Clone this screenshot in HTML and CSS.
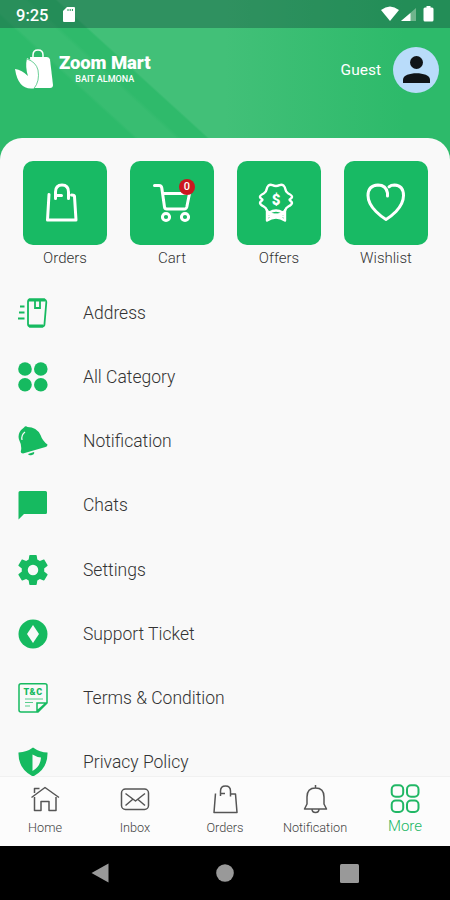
FILE: index.html
```html
<!DOCTYPE html>
<html lang="en">
<head>
    <meta charset="UTF-8">
    <meta name="viewport" content="width=device-width, initial-scale=1">
    <title>Zoom Mart - More</title>
    <link rel="stylesheet" href="styles.css">
</head>
<body>
    <div class="screen">
        <div class="status-bar">
            <span class="clock">9:25</span>
            <svg class="sd-card" width="12" height="15" viewBox="0 0 12 15"><path fill="#fff" d="M4 0h7q1 0 1 1v13q0 1-1 1H1q-1 0-1-1V4z"/><path stroke="#26945a" d="M5 2v2M7.2 2v2M9.4 2v2"/></svg>
            <div class="status-icons">
                <svg width="54" height="16" viewBox="0 0 54 16">
                    <path fill="#fff" d="M0 4Q9-3 18 4L9 15z"/>
                    <path fill="#6fb48c" d="M35 2v13H20z"/>
                    <path fill="#fff" d="M29.500 7v8H20z"/>
                    <path fill="#fff" d="M45.500 1.500V0h4v1.500h1.500q1.500 0 1.500 1.500v11q0 1.500-1.500 1.500h-7Q42.500 15.500 42.500 14V3q0-1.500 1.500-1.500z"/>
                </svg>
            </div>
        </div>

        <header class="header">
            <div class="brand">
                <svg class="logo" width="39" height="40" viewBox="0 0 39 40">
                    <path fill="none" stroke="#fff" stroke-width="1.500" d="M18 10V6q0-5 5-5t5 5v4"/>
                    <path fill="#fff" d="M15 8h17q2.500 0 3 2.500L38 36q0 3-3 3H17z"/>
                    <path fill="#fff" d="M12 9q9 4 11 12 2 11-4 18.500h-3Q3 39.500 0 20q7 1 13 7-3-9-1-18z"/>
                    <path fill="none" stroke="#2dba6a" stroke-width=".7" d="M12 10q9 3 11 11 2 11-4 18.500"/>
                </svg>
                <div class="brand-text">
                    <div class="brand-name">Zoom Mart</div>
                    <div class="brand-sub">BAIT ALMONA</div>
                </div>
            </div>
            <div class="user">
                <span class="user-name">Guest</span>
                <div class="avatar">
                    <svg width="27" height="27" viewBox="0 0 27 27"><circle cx="13.500" cy="6.500" r="6.500"/><path d="M0 27v-3.500C0 15 27 15 27 23.500V27z"/></svg>
                </div>
            </div>
        </header>

        <main class="panel">
            <div class="tiles">
                <div class="tile">
                    <div class="tile-box">
                        <svg class="tile-icon" width="42" height="42" viewBox="0 0 42 42">
                            <path d="M5 12.500 3.500 38h28.500L30.500 14.500q0-1.500-3-1.500M11.500 16.500V10q0-7 6.500-7t6.500 7v6.500M12 13.500h5.500"/>
                        </svg>
                    </div>
                    <span class="tile-label">Orders</span>
                </div>
                <div class="tile">
                    <div class="tile-box">
                        <svg class="tile-icon" width="42" height="42" viewBox="0 0 42 42">
                            <path d="M3.500 3.500H8q2.500 0 2.800 2.500l2.700 19q.3 2 2.300 2h17.500q2 0 2.500-2L38.500 11.500H12"/>
                            <circle cx="15" cy="35" r="3.600"/><circle cx="34" cy="35" r="3.600"/>
                        </svg>
                        <span class="badge">0</span>
                    </div>
                    <span class="tile-label">Cart</span>
                </div>
                <div class="tile">
                    <div class="tile-box">
                        <svg class="tile-icon" width="42" height="42" viewBox="0 0 42 42">
                            <path class="ribbon" d="M10.500 3.500q2-1.500 4-.3 3.500 1.600 7 0 2-1.200 4 .3 1.500 1.500 1.800 3.500.4 3 3 4.500 4 2 3.700 3.500-.2 1.200-1.700 2t0 1.800q1.700 1.200 1.700 2.200 0 1.500-3.700 3.500-2.600 1.500-3 3.500-1 2.500-3.300 2.300-2.500-1.800-6-1.800t-6 1.800q-2.300.2-3.300-2.300-.4-2-3-3.500Q2 22.500 2 21q0-1 1.700-2.200 1.500-1 0-1.800T2 15q-.3-1.500 3.700-3.500 2.600-1.500 3-4.500.3-2 1.800-3.500z"/>
                            <path class="ribbon" d="M9 28.500v10q9-6 18 0v-10M10 31.500l16 3M26 31.500l-16 3"/>
                            <text class="dollar" x="18" y="22.500">$</text>
                        </svg>
                    </div>
                    <span class="tile-label">Offers</span>
                </div>
                <div class="tile">
                    <div class="tile-box">
                        <svg class="tile-icon" width="42" height="42" viewBox="0 0 42 42">
                            <path d="M22.500 14V11q-1.500-8-9.500-8Q3 3.500 3 13.500q0 8 8 16 5 5 10 8 5-3 10-8 7.500-8 7.500-16 0-10-9-10.500-3.500 0-5.500 1.800"/>
                        </svg>
                    </div>
                    <span class="tile-label">Wishlist</span>
                </div>
            </div>

            <div class="menu">
                <div class="menu-item">
                    <svg class="menu-icon" viewBox="0 0 30 30"><path class="line" d="M11.500 1.500h14q3 0 2.800 3L26.500 26q0 2.500-2.500 2.500H12.500q-2.500 0-2.500-2.500V4q0-2.500 1.500-2.500zM17 2v8h5V2M2 8.500h4.500M1 14.500h5.500M0 20.500h6.500"/><path class="edge" d="M11 2h16M11 28h14"/></svg>
                    <span>Address</span>
                </div>
                <div class="menu-item">
                    <svg class="menu-icon" viewBox="0 0 30 30"><circle cx="7" cy="7" r="6.800"/><circle cx="22.800" cy="7" r="6.800"/><circle cx="7" cy="22.800" r="6.800"/><circle cx="22.800" cy="22.800" r="6.800"/></svg>
                    <span>All Category</span>
                </div>
                <div class="menu-item">
                    <svg class="menu-icon" viewBox="0 0 30 30"><path d="M6 1.500Q7.500-.5 9.500 1q9 0 13 8 2 6 7 9.500 0 2-2 2.500L5 27.500q-3 0-2-3 1-5-2-11-2-7 5-12zM10 28l6-2q1 2-2 3t-4-1z"/><path class="shine" d="M4 14q-1-5 3-8"/></svg>
                    <span>Notification</span>
                </div>
                <div class="menu-item">
                    <svg class="menu-icon" viewBox="0 0 30 30"><path d="M2 1h25.500q1.500 0 1.500 1.500v20Q29 24 27.500 24H6l-5.500 5.500v-27Q.5 1 2 1z"/></svg>
                    <span>Chats</span>
                </div>
                <div class="menu-item">
                    <svg class="menu-icon" viewBox="2 2 20 20"><path d="M19.430 12.980c.04-.32.070-.64.070-.98s-.03-.66-.07-.98l2.110-1.650c.19-.15.240-.42.120-.64l-2-3.460c-.12-.22-.39-.3-.61-.22l-2.490 1c-.52-.4-1.080-.73-1.690-.98l-.38-2.650A.488.488 0 0 0 14 2h-4c-.25 0-.46.180-.49.420l-.38 2.650c-.61.250-1.170.590-1.690.980l-2.490-1c-.23-.09-.49 0-.61.220l-2 3.460c-.13.220-.07.490.120.640l2.110 1.650c-.04.320-.07.650-.07.980s.03.660.070.980l-2.110 1.650c-.19.150-.24.420-.12.640l2 3.460c.12.220.39.300.61.220l2.490-1c.52.400 1.080.730 1.690.980l.38 2.650c.03.240.24.420.49.420h4c.25 0 .46-.18.490-.42l.38-2.650c.61-.25 1.170-.59 1.690-.98l2.490 1c.23.090.49 0 .61-.22l2-3.460c.12-.22.070-.49-.12-.64zM12 15.500a3.500 3.500 0 1 1 0-7 3.500 3.500 0 0 1 0 7z"/></svg>
                    <span>Settings</span>
                </div>
                <div class="menu-item">
                    <svg class="menu-icon" viewBox="0 0 30 30"><circle cx="15" cy="15" r="14.500"/><path class="cut" d="m15 6 6 9-6 9-6-9z"/></svg>
                    <span>Support Ticket</span>
                </div>
                <div class="menu-item">
                    <svg class="menu-icon" viewBox="0 0 30 30"><path class="thin" d="M3 .8h24q2 0 2 2V20l-9 9H3q-2 0-2-2V2.800q0-2 2-2zM19 28v-8h9z"/><path class="faint" d="M7 16h18M7 19.500h8M7 23h5"/><text class="tc" x="15" y="12">T&amp;C</text></svg>
                    <span>Terms &amp; Condition</span>
                </div>
                <div class="menu-item">
                    <svg class="menu-icon" viewBox="0 0 30 30"><path d="M15 .5q7 5 14.500 5Q30 22 15 29.500 0 22 .5 5.500 9 5 15 .5z"/><path class="cut" d="M14.500 7.500q4 2.500 8.500 3-.5 9-8.500 13.500z"/></svg>
                    <span>Privacy Policy</span>
                </div>
            </div>
        </main>

        <nav class="tab-bar">
            <div class="tab">
                <svg class="tab-icon" viewBox="0 0 30 30"><path d="M1.500 12.500 15 2.500l14 10M4.500 12v13.500H11v-9h8v9h7V12M4.500 8V3.500h5"/></svg>
                <span>Home</span>
            </div>
            <div class="tab">
                <svg class="tab-icon" viewBox="0 0 30 30"><rect x="1.500" y="4" width="27" height="20.500" rx="4"/><path d="m5.500 8.500 10 7.500L25 8.500M5.500 20.500l7-6M18 14.500l7 6"/></svg>
                <span>Inbox</span>
            </div>
            <div class="tab">
                <svg class="tab-icon" viewBox="0 0 30 30"><path d="M5.500 8.500 4 27.500h23L25.500 9H21M10.500 11V6q0-5 5-5t5 5v5.500M11 8.500h4"/></svg>
                <span>Orders</span>
            </div>
            <div class="tab">
                <svg class="tab-icon" viewBox="0 0 30 30"><path d="M15.500 0v2.500M7 19v-7q0-9 8.500-9T24 12v7l2.500 5h-22zM12 24q0 3.500 3.500 3.500T19 24"/></svg>
                <span>Notification</span>
            </div>
            <div class="tab active">
                <svg class="tab-icon" viewBox="0 0 30 30"><rect x="1.700" y="1.200" width="11.500" height="11.500" rx="4"/><rect x="17" y="1.200" width="11.500" height="11.500" rx="4"/><rect x="1.700" y="16.500" width="11.500" height="11.500" rx="4"/><rect x="17" y="16.500" width="11.500" height="11.500" rx="4"/></svg>
                <span>More</span>
            </div>
        </nav>

        <div class="system-bar">
            <svg width="18" height="20" viewBox="0 0 18 20"><path d="M17.500.5v19L.5 10z"/></svg>
            <svg width="18" height="18" viewBox="0 0 18 18"><circle cx="9" cy="9" r="8.800"/></svg>
            <svg width="19" height="19" viewBox="0 0 19 19"><rect width="19" height="19" rx="1.500"/></svg>
        </div>
    </div>
</body>
</html>
```
FILE: styles.css
```css
* {
    box-sizing: border-box;
}
body {
    margin: 0;
    font-family: Roboto, "Liberation Sans", sans-serif;
    font-weight: 300;
    color: #333;
}
.screen {
    width: 450px;
    height: 900px;
    display: flex;
    flex-direction: column;
    overflow: hidden;
    background:
        linear-gradient(to right, rgba(45, 186, 106, 0) 50%, #2dba6a 90%) 0 0 / 450px 165px no-repeat,
        linear-gradient(42.3deg, #2dba6a 0 110px, #38bd71 113px 138px, #2fba6b 142px 159px, #42c078 161px) 0 0 / 450px 165px no-repeat,
        #2dba6a;
}
.status-bar {
    height: 28px;
    flex-shrink: 0;
    display: flex;
    align-items: center;
    padding: 0 15px 0 16px;
    background: rgba(20, 75, 60, 0.4);
    color: #fff;
}
.clock {
    font-size: 16.500px;
    font-weight: 500;
    margin-top: 2px;
}
.sd-card {
    margin-left: 15px;
    margin-top: 1px;
}
.status-icons {
    margin-left: auto;
    display: flex;
}
.header {
    height: 110px;
    flex-shrink: 0;
    display: flex;
    justify-content: space-between;
    padding: 18px 11px 0 15px;
    color: #fff;
}
.brand {
    display: flex;
    height: 44px;
    padding-top: 3px;
}
.brand-text {
    margin-left: 5px;
    padding-top: 3px;
    text-align: center;
}
.brand-name {
    font-size: 18.500px;
    line-height: 22px;
    font-weight: 900;
    letter-spacing: -0.100px;
}
.brand-sub {
    font-size: 9px;
    line-height: 11px;
    font-weight: 500;
}
.user {
    display: flex;
    height: 47px;
    align-items: center;
    gap: 12px;
}
.user-name {
    font-size: 15.500px;
    font-weight: 400;
}
.avatar {
    width: 46px;
    height: 46px;
    border-radius: 50%;
    background: #b9dcfa;
    display: flex;
    align-items: center;
    justify-content: center;
}
.avatar svg {
    fill: #101418;
}
.panel {
    flex: 1;
    min-height: 0;
    overflow: hidden;
    padding: 23px 22px 0 23px;
    background: #f9f9f9;
    border-radius: 22px 22px 0 0;
}
.tiles {
    display: flex;
    justify-content: space-between;
}
.tile {
    width: 84px;
    text-align: center;
}
.tile-box {
    position: relative;
    height: 84px;
    border-radius: 10px;
    background: #18ba64;
    display: flex;
    align-items: center;
    justify-content: center;
}
.tile-icon {
    fill: none;
    stroke: #fff;
    stroke-width: 3;
    stroke-linejoin: round;
    stroke-linecap: round;
}
.tile-icon .ribbon {
    stroke-width: 2.400;
}
.dollar {
    font: 900 15px Roboto, sans-serif;
    text-anchor: middle;
    fill: #fff;
    stroke: none;
}
.badge {
    position: absolute;
    top: 18px;
    left: 49px;
    width: 16px;
    height: 16px;
    border-radius: 50%;
    background: #cb1620;
    color: #fff;
    font-size: 11px;
    line-height: 16px;
    font-weight: 500;
}
.tile-label {
    display: block;
    line-height: 26px;
    font-size: 15px;
}
.menu {
    margin-left: -5px;
    margin-top: 10px;
}
.menu-item {
    height: 64.150px;
    display: flex;
    align-items: center;
    gap: 35px;
    font-size: 17.500px;
    white-space: nowrap;
}
.menu-icon {
    width: 30px;
    height: 30px;
    fill: #16ba60;
}
.menu-icon .line,
.menu-icon .thin,
.menu-icon .faint {
    fill: none;
    stroke: #16ba60;
    stroke-width: 1.800;
}
.menu-icon .thin {
    stroke-width: 1.500;
}
.menu-icon .faint {
    stroke-width: 1.200;
    opacity: 0.7;
}
.menu-icon .edge {
    stroke: #16ba60;
    stroke-width: 2.800;
}
.menu-icon .shine {
    fill: none;
    stroke: #f9f9f9;
    stroke-width: 1.200;
}
.menu-icon .cut {
    fill: #f9f9f9;
}
.tc {
    font: 900 9px Roboto, sans-serif;
    text-anchor: middle;
    letter-spacing: 0.500px;
}
.tab-bar {
    height: 70px;
    flex-shrink: 0;
    display: flex;
    background: #fcfcfc;
    border-top: 1px solid #f1f1f1;
}
.tab {
    width: 20%;
    display: flex;
    flex-direction: column;
    align-items: center;
    padding-top: 8px;
    font-size: 12.700px;
    line-height: 15px;
    color: #444;
}
.tab span {
    margin-top: 5px;
}
.tab-icon {
    width: 30px;
    height: 30px;
    fill: none;
    stroke: #555;
    stroke-width: 1.500;
    stroke-linejoin: round;
}
.tab.active {
    padding-top: 7px;
    font-size: 15px;
    color: #21b765;
}
.tab.active .tab-icon {
    stroke: #21b765;
    stroke-width: 2;
}
.system-bar {
    height: 54px;
    flex-shrink: 0;
    display: flex;
    align-items: center;
    justify-content: space-between;
    padding: 0 91px;
    background: #000;
}
.system-bar svg {
    fill: #999;
}
```
